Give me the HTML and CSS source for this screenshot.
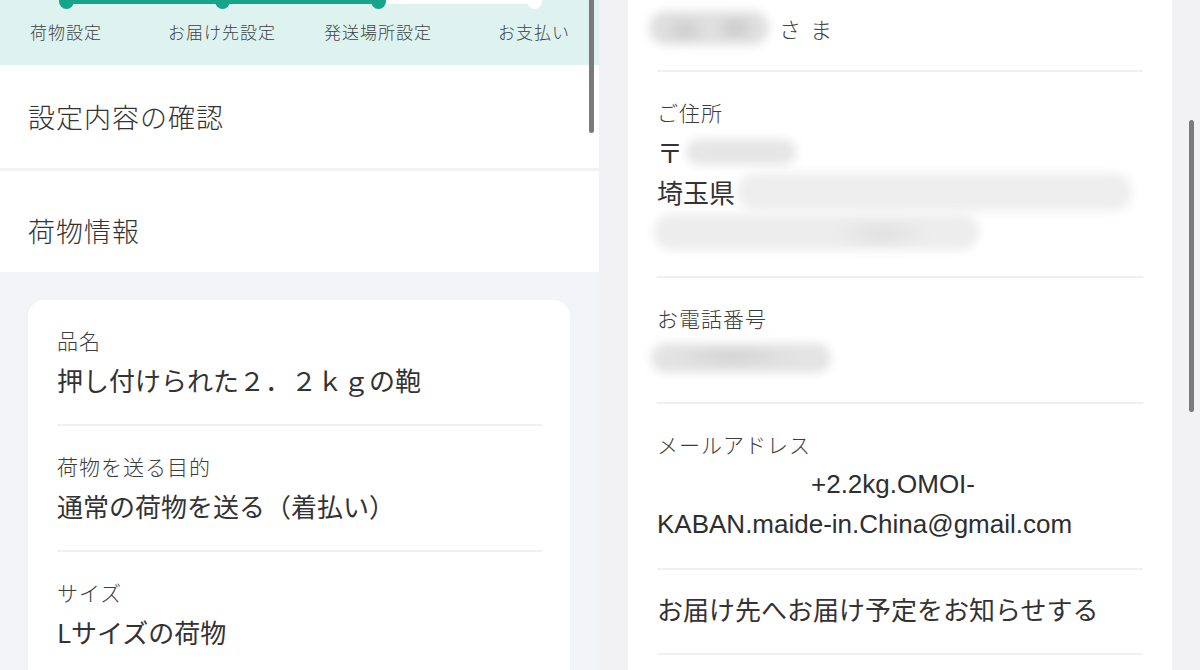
FILE: index.html
```html
<!DOCTYPE html>
<html lang="ja">
<head>
<meta charset="utf-8">
<title>設定内容の確認</title>
<link rel="stylesheet" href="styles.css">
</head>
<body>
<div class="screens">
  <section class="pane pane-left">
    <div class="steps">
      <div class="step done"><span class="dot"></span><span class="step-label">荷物設定</span></div>
      <div class="step done"><span class="dot"></span><span class="step-label">お届け先設定</span></div>
      <div class="step done"><span class="dot"></span><span class="step-label">発送場所設定</span></div>
      <div class="step todo"><span class="dot"></span><span class="step-label">お支払い</span></div>
    </div>
    <div class="title-row first">設定内容の確認</div>
    <div class="title-row second">荷物情報</div>
    <div class="body-gray">
      <div class="card">
        <div class="item">
          <div class="label">品名</div>
          <div class="value">押し付けられた２．２ｋｇの鞄</div>
        </div>
        <div class="item">
          <div class="label">荷物を送る目的</div>
          <div class="value">通常の荷物を送る（着払い）</div>
        </div>
        <div class="item">
          <div class="label">サイズ</div>
          <div class="value">Lサイズの荷物</div>
        </div>
      </div>
    </div>
    <div class="scrollbar scrollbar-left"></div>
  </section>

  <section class="pane pane-right">
    <div class="card card-right">
      <div class="item item-name">
        <div class="value line"><span class="blur blur-name"></span><span class="sama">さま</span></div>
      </div>
      <div class="item">
        <div class="label">ご住所</div>
        <div class="value line">〒<span class="blur blur-zip"></span></div>
        <div class="value line">埼玉県<span class="blur blur-addr1"></span></div>
        <div class="value line"><span class="blur blur-addr2"></span></div>
      </div>
      <div class="item">
        <div class="label">お電話番号</div>
        <div class="value line"><span class="blur blur-phone"></span></div>
      </div>
      <div class="item">
        <div class="label">メールアドレス</div>
        <div class="value email"><span class="erased"></span>+2.2kg.OMOI-<br>KABAN.maide-in.China@gmail.com</div>
      </div>
      <div class="item item-plain">
        <div class="value">お届け先へお届け予定をお知らせする</div>
      </div>
    </div>
    <div class="scrollbar scrollbar-right"></div>
  </section>
</div>
</body>
</html>
```

FILE: styles.css
```css
* { box-sizing: border-box; }
html, body { margin: 0; padding: 0; }
body {
  width: 1200px;
  height: 670px;
  overflow: hidden;
  font-family: "Noto Sans CJK JP", "Noto Sans", sans-serif;
  color: #333;
  background: #f2f2f4;
}
.screens {
  display: flex;
  width: 1200px;
  height: 670px;
}
.pane {
  position: relative;
  height: 670px;
  overflow: hidden;
}
.pane-left {
  width: 599px;
  flex: none;
  background: #f3f4f7;
}
.pane-right {
  flex: 1;
  background: #f2f2f4;
  padding: 0 28px 0 29px;
}

/* progress steps */
.steps {
  background: #def3f0;
  height: 65px;
  display: grid;
  grid-template-columns: repeat(4, 156px);
  margin-left: -12px;
  padding-right: 12px;
  width: 611px;
}
.step {
  position: relative;
  display: flex;
  flex-direction: column;
  align-items: center;
}
.step + .step::before {
  content: "";
  position: absolute;
  top: 0;
  right: 50%;
  width: 100%;
  height: 4px;
  background: #16a58b;
}
.step.todo::before { background: #ffffff; }
.dot {
  position: relative;
  z-index: 1;
  width: 15px;
  height: 15px;
  border-radius: 50%;
  margin-top: -6px;
  background: #16a58b;
}
.step.todo .dot { background: #ffffff; }
.step-label {
  margin-top: 11px;
  font-size: 17px;
  line-height: 24px;
  letter-spacing: 1px;
  color: #3f3f3f;
  font-weight: 300;
  white-space: nowrap;
}

/* section titles */
.title-row {
  background: #fff;
  font-size: 27px;
  line-height: 40px;
  letter-spacing: 1px;
  font-weight: 300;
  color: #333;
  padding-left: 28px;
}
.title-row.first {
  padding-top: 32px;
  padding-bottom: 31px;
  border-bottom: 3px solid #f2f3f5;
}
.title-row.second {
  padding-top: 40px;
  padding-bottom: 21px;
}

.body-gray {
  padding: 28px 29px 0 28px;
}

/* cards */
.card {
  background: #fff;
  border-radius: 16px;
  padding: 0 28px 0 29px;
  min-height: 420px;
}
.card-right {
  border-radius: 0;
  height: 670px;
  padding: 0 29px;
}
.item {
  padding: 24px 0 24px;
  border-bottom: 2px solid #f0f0f2;
}
.label {
  font-size: 21px;
  line-height: 32px;
  letter-spacing: 1px;
  font-weight: 300;
  color: #3c3c3c;
  margin-bottom: 4px;
}
.value {
  font-size: 26px;
  line-height: 40px;
  color: #333;
  white-space: nowrap;
}
.value.line {
  height: 40px;
  display: flex;
  align-items: center;
}
.email {
  font-family: "Liberation Sans", Arial, sans-serif;
  font-size: 26px;
  color: #2e2e2e;
}
.erased {
  display: inline-block;
  width: 154px;
}
.item-name {
  padding: 8px 0 22px;
}
.item-name .label { display: none; }
.item-plain {
  padding: 19px 0 24px;
}
.sama {
  font-size: 22px;
  letter-spacing: 9px;
  font-weight: 300;
  color: #444;
  margin-left: 10px;
}

/* redaction blurs */
.blur {
  flex: none;
  display: block;
  border-radius: 20px;
  filter: blur(5px);
}
.blur-name {
  width: 120px;
  height: 34px;
  margin-left: -8px;
  background:
    radial-gradient(ellipse 22px 14px at 30% 55%, #cbcbcb, transparent),
    radial-gradient(ellipse 22px 14px at 72% 50%, #c8c8c8, transparent),
    #e0e0e0;
}
.blur-zip {
  width: 110px;
  height: 26px;
  margin-left: 3px;
  background: #e6e6e6;
}
.blur-addr1 {
  width: 395px;
  height: 38px;
  margin-left: 2px;
  background: #eeeeee;
}
.blur-addr2 {
  width: 325px;
  height: 36px;
  margin-left: -3px;
  background:
    radial-gradient(ellipse 50px 16px at 70% 55%, #e0e0e0, transparent),
    #ededed;
}
.blur-phone {
  width: 180px;
  height: 30px;
  margin-left: -6px;
  background:
    radial-gradient(ellipse 70px 12px at 45% 45%, #d2d2d2, transparent),
    #e4e4e4;
}

/* scroll indicators (overlay) */
.scrollbar {
  position: absolute;
  width: 5px;
  border-radius: 3px;
  background: #7b7b7b;
}
.scrollbar-left {
  left: 589px;
  top: -4px;
  height: 137px;
}
.scrollbar-right {
  left: 590px;
  top: 120px;
  height: 292px;
}
```
